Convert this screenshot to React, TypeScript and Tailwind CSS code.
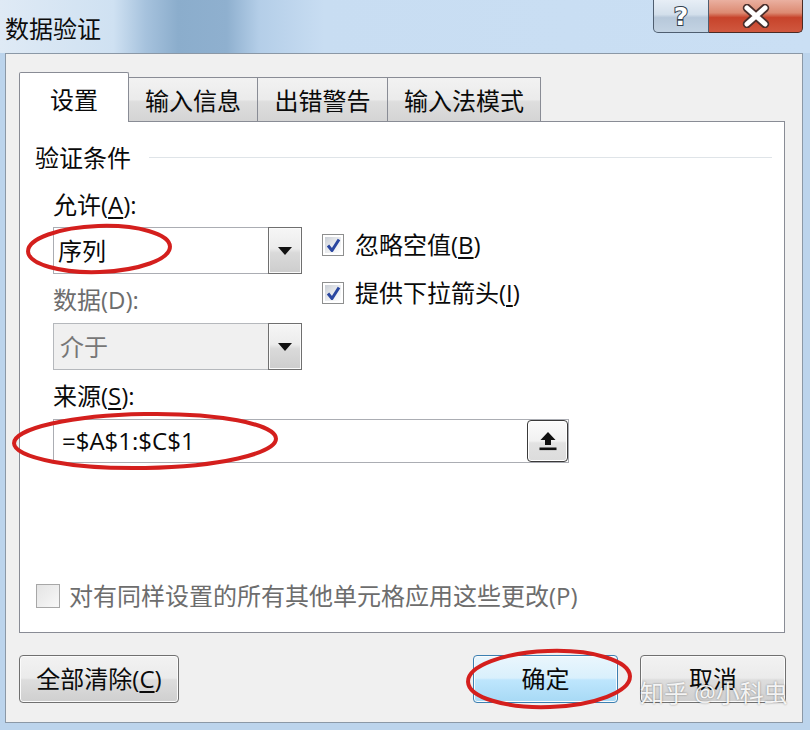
import React from "react";

function DropBtn() {
  return (
    <div className="w-[34px] h-full border border-[#6f6f6f] bg-[linear-gradient(#f6f6f6_0%,#ececec_45%,#dadada_55%,#cdcdcd_100%)] shadow-[inset_0_0_0_1px_#fafafa] flex items-center justify-center">
      <svg width="14" height="8" viewBox="0 0 14 8">
        <polygon points="0,0 14,0 7,8" fill="#111" />
      </svg>
    </div>
  );
}

function CheckBox({ checked }: { checked: boolean }) {
  return (
    <div className="w-[22px] h-[22px] border border-[#8e8f8f] bg-white p-[2px]">
      <div className="w-full h-full bg-[linear-gradient(135deg,#c9ced6_0%,#e9ebee_50%,#ffffff_100%)] flex items-center justify-center">
        {checked && (
          <svg width="15" height="15" viewBox="0 0 15 15">
            <path d="M2 7.5 L6 12.5 L13 1.5" fill="none" stroke="#2a47a0" strokeWidth="3" strokeLinejoin="round" />
          </svg>
        )}
      </div>
    </div>
  );
}

function Button({ children, primary, w }: { children: React.ReactNode; primary?: boolean; w: string }) {
  return (
    <div
      className={
        (primary
          ? "border-[#3c7fb1] bg-[linear-gradient(#eaf6fd_0%,#d9f0fc_48%,#bee6fd_52%,#a7d9f5_100%)] "
          : "border-[#707070] bg-[linear-gradient(#f2f2f2_0%,#ebebeb_48%,#dddddd_52%,#cfcfcf_100%)] ") +
        w +
        " h-[48px] border rounded-[4px] shadow-[inset_0_0_0_1px_#fbfbfb] flex items-center justify-center text-[24px] leading-none"
      }
    >
      {children}
    </div>
  );
}

export default function App() {
  return (
    <div className="relative w-[810px] h-[730px] overflow-hidden bg-[#bcd4ec] font-['Open_Sans','Noto_Sans_CJK_SC',sans-serif] text-[#0a0a0a]">
      {/* title bar */}
      <div className="h-[53px] flex items-start justify-between bg-[linear-gradient(90deg,#dfeaf5_0%,#cfe1f2_14%,#a6c2dd_18%,#8badcc_22%,#8fb0cf_28%,#b4cee8_32%,#c8ddf2_40%,#cadff4_100%)]">
        <div className="pl-[5px] pt-[14px] text-[24px] leading-[30px] text-[#0c0c0c]">数据验证</div>
        <div className="flex mr-[7px] h-[33px]">
          <div className="w-[56px] h-full border border-t-0 border-[#4f5e70] rounded-bl-[5px] bg-[linear-gradient(#e7eef6_0%,#d3dfeb_45%,#b7c8da_55%,#c3d3e3_100%)] flex items-center justify-center">
            <span className="font-['DejaVu_Sans',sans-serif] text-[25px] leading-none font-bold text-white [-webkit-text-stroke:2px_#34414f] [paint-order:stroke_fill]">
              ?
            </span>
          </div>
          <div className="w-[94px] h-full border border-t-0 border-l-0 border-[#4a2a24] rounded-br-[5px] bg-[linear-gradient(#eab0a0_0%,#dc8a72_40%,#c7432b_55%,#d0583f_100%)] flex items-center justify-center">
            <svg width="30" height="24" viewBox="0 0 30 24">
              <path d="M6 4 L24 20 M24 4 L6 20" stroke="#4a2f2c" strokeWidth="8.5" strokeLinecap="round" />
              <path d="M6 4 L24 20 M24 4 L6 20" stroke="#fff" strokeWidth="5" strokeLinecap="round" />
            </svg>
          </div>
        </div>
      </div>

      {/* client area */}
      <div className="ml-[5px] mr-[7px] h-[670px] bg-[#f0f0f0] border border-[#8b98a6] flex flex-col px-[13px] pt-[18px]">
        {/* tabs */}
        <div className="flex items-end h-[49px]">
          <div className="relative z-10 w-[110px] h-[50px] -mb-px bg-white border border-b-0 border-[#898c95] rounded-t-[2px] flex items-center justify-center pt-[4px] text-[24px]">
            设置
          </div>
          <div className="w-[129px] h-[44px] border border-l-0 border-b-0 border-[#898c95] bg-[linear-gradient(#f2f2f2_0%,#ebebeb_50%,#dedede_55%,#d4d4d4_100%)] flex items-center justify-center pt-[2px] text-[24px]">
            输入信息
          </div>
          <div className="w-[130px] h-[44px] border border-l-0 border-b-0 border-[#898c95] bg-[linear-gradient(#f2f2f2_0%,#ebebeb_50%,#dedede_55%,#d4d4d4_100%)] flex items-center justify-center pt-[2px] text-[24px]">
            出错警告
          </div>
          <div className="w-[153px] h-[44px] border border-l-0 border-b-0 border-[#898c95] bg-[linear-gradient(#f2f2f2_0%,#ebebeb_50%,#dedede_55%,#d4d4d4_100%)] flex items-center justify-center pt-[2px] text-[24px]">
            输入法模式
          </div>
        </div>

        {/* panel */}
        <div className="w-[766px] h-[512px] border border-[#898c95] bg-white flex flex-col text-[24px]">
          <div className="mt-[21px] pl-[15px] pr-[12px] flex items-center h-[30px] leading-[30px]">
            <span>验证条件</span>
            <div className="flex-1 ml-[18px] h-[2px] bg-[#dfe4e8] border-b border-white"></div>
          </div>

          <div className="mt-[17px] pl-[33px] flex items-start">
            <div className="w-[249px] flex flex-col">
              <div className="h-[30px] leading-[30px]">
                允许(<span className="underline underline-offset-[3px]">A</span>):
              </div>
              <div className="mt-[7px] h-[47px] flex">
                <div className="flex-1 border border-r-0 border-[#abadb3] bg-white flex items-center pl-[4px]">序列</div>
                <DropBtn />
              </div>
              <div className="mt-[11px] h-[30px] leading-[30px] text-[#6d6d6d]">数据(D):</div>
              <div className="mt-[8px] h-[47px] flex">
                <div className="flex-1 border border-r-0 border-[#b5b8bc] bg-[#f0f0f0] flex items-center pl-[6px] text-[#777]">介于</div>
                <DropBtn />
              </div>
            </div>
            <div className="ml-[20px] pt-[40px] flex flex-col">
              <div className="h-[30px] flex items-center gap-[11px]">
                <CheckBox checked />
                <span>
                  忽略空值(<span className="underline underline-offset-[3px]">B</span>)
                </span>
              </div>
              <div className="mt-[18px] h-[30px] flex items-center gap-[11px]">
                <CheckBox checked />
                <span>
                  提供下拉箭头(<span className="underline underline-offset-[3px]">I</span>)
                </span>
              </div>
            </div>
          </div>

          <div className="mt-[11px] pl-[33px] h-[30px] leading-[30px]">
            来源(<span className="underline underline-offset-[3px]">S</span>):
          </div>
          <div className="mt-[8px] ml-[33px] w-[516px] h-[44px] flex border border-[#abadb3] bg-white">
            <div className="flex-1 flex items-center pl-[8px] text-[24px]">=$A$1:$C$1</div>
            <div className="w-[41px] h-full rounded-[4px] border border-[#3a3a3a] bg-[linear-gradient(#fbfbfb_0%,#f1f1f1_50%,#e2e2e2_55%,#dcdcdc_100%)] shadow-[inset_0_0_0_1px_#ffffff] flex items-center justify-center">
              <svg width="20" height="22" viewBox="0 0 20 22">
                <path d="M10 2 L2.5 10 H7 V15 H13 V10 H17.5 Z" fill="#111" />
                <rect x="1.5" y="17.5" width="17" height="2.6" fill="#111" />
              </svg>
            </div>
          </div>

          <div className="mt-auto mb-[21px] pl-[16px] h-[30px] flex items-center gap-[9px] text-[#6d6d6d]">
            <div className="w-[24px] h-[24px] border border-[#a7a7a7] bg-[linear-gradient(135deg,#e4e4e4_0%,#f8f8f8_100%)]"></div>
            <span>对有同样设置的所有其他单元格应用这些更改(P)</span>
          </div>
        </div>

        {/* buttons */}
        <div className="mt-[22px] flex items-start justify-between w-[767px]">
          <Button w="w-[160px]">
            全部清除(<span className="underline underline-offset-[3px]">C</span>)
          </Button>
          <div className="flex gap-[22px]">
            <Button primary w="w-[145px]">确定</Button>
            <Button w="w-[146px]">取消</Button>
          </div>
        </div>
      </div>

      {/* annotation ellipses */}
      <svg className="absolute inset-0 pointer-events-none" width="810" height="730" viewBox="0 0 810 730">
        <ellipse cx="99" cy="249" rx="71" ry="23" fill="none" stroke="#d41f1d" strokeWidth="4" transform="rotate(-2 99 249)" />
        <ellipse cx="145" cy="441" rx="131" ry="27" fill="none" stroke="#d41f1d" strokeWidth="4" transform="rotate(-1 145 441)" />
        <ellipse cx="549" cy="679" rx="81" ry="28" fill="none" stroke="#d41f1d" strokeWidth="4" transform="rotate(-2 549 679)" />
      </svg>

      {/* watermark */}
      <div className="absolute left-[640px] top-[678px] text-[24px] leading-[30px] text-white/90 [text-shadow:0_0_2px_rgba(0,0,0,0.45)] whitespace-nowrap">
        知乎 @小科虫
      </div>
    </div>
  );
}
